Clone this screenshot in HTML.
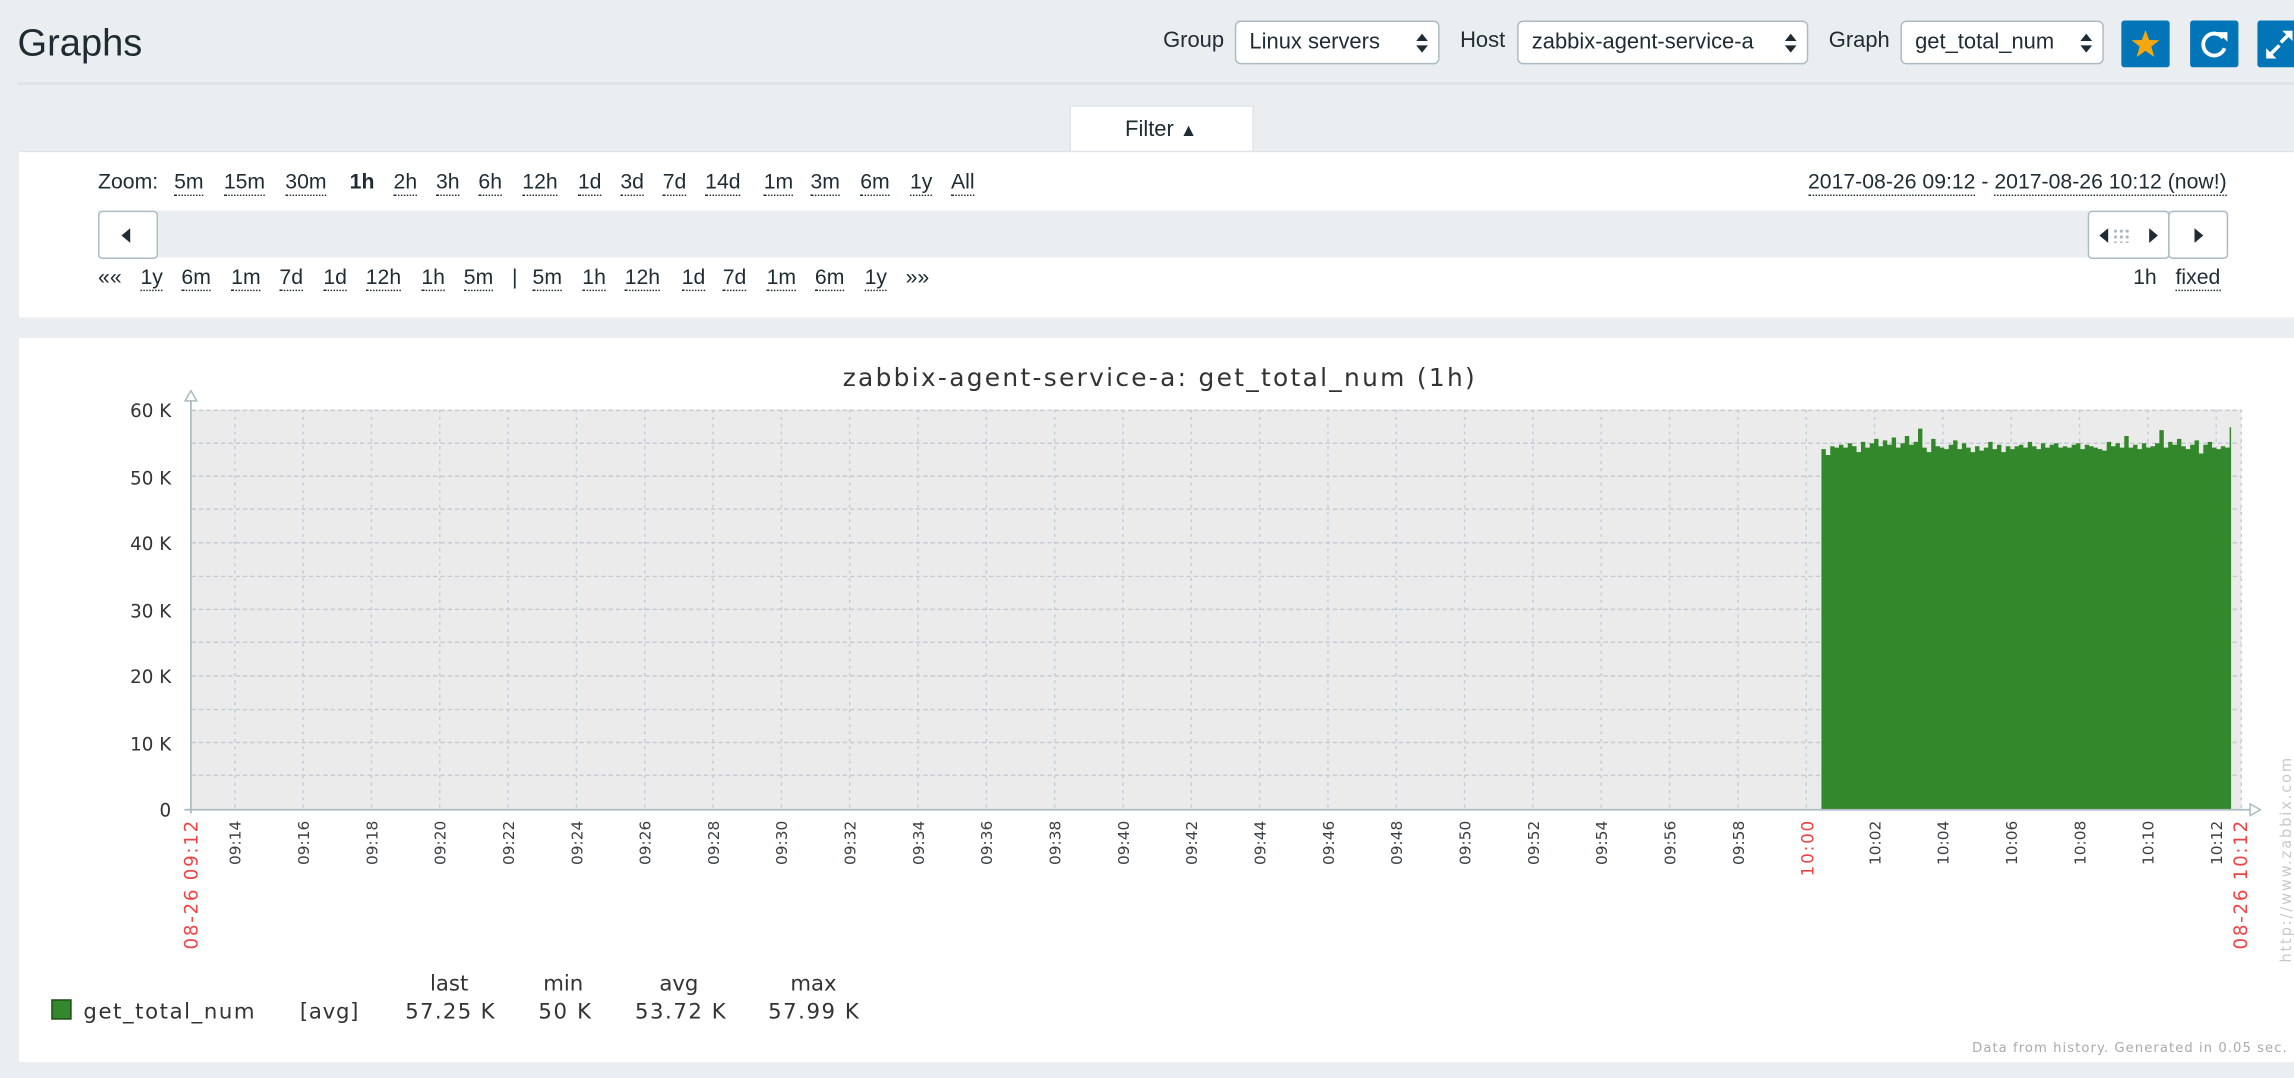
<!DOCTYPE html>
<html><head><meta charset="utf-8">
<style>
html,body{margin:0;padding:0;width:2294px;height:1078px;overflow:hidden;background:#ebeef0;}
#w{position:absolute;left:0;top:0;width:1568px;height:737px;transform:scale(1.46301);transform-origin:0 0;font-family:"Liberation Sans",Arial,sans-serif;color:#1f2c33;}
.a{position:absolute;white-space:nowrap;}
.sel{position:absolute;top:14px;height:30px;background:#fff;border:1px solid #acbbc2;border-radius:4px;box-sizing:border-box;font-size:15px;line-height:28px;padding-left:9px;}
.sel i{position:absolute;right:7px;top:8px;width:0;height:0;border-left:4px solid transparent;border-right:4px solid transparent;border-bottom:5px solid #1f2c33;}
.sel b{position:absolute;right:7px;top:16px;width:0;height:0;border-left:4px solid transparent;border-right:4px solid transparent;border-top:5px solid #1f2c33;}
.lbl{position:absolute;top:19px;font-size:15px;}
.btn{position:absolute;top:14px;width:33px;height:32px;background:#0275b8;border-radius:2px;}
.z{position:absolute;font-size:14.5px;white-space:nowrap;}
.u{border-bottom:1px dotted #1f2c33;}
.nb{position:absolute;background:#fff;border:1px solid #acbbc2;border-radius:3px;box-sizing:border-box;}
</style></head><body><div id="w">
<div class="a" style="left:12px;top:14px;font-size:26px;">Graphs</div>
<div class="lbl" style="left:795px;">Group</div>
<div class="sel" style="left:844px;width:140px;">Linux servers<i></i><b></b></div>
<div class="lbl" style="left:998px;">Host</div>
<div class="sel" style="left:1037px;width:199px;">zabbix-agent-service-a<i></i><b></b></div>
<div class="lbl" style="left:1250px;">Graph</div>
<div class="sel" style="left:1299px;width:139px;">get_total_num<i></i><b></b></div>
<div class="btn" style="left:1450px;"><svg width="33" height="32" viewBox="0 0 33 32"><polygon points="16.5,6.5 19,13.3 26,13.5 20.5,17.8 22.5,25 16.5,20.8 10.5,25 12.5,17.8 7,13.5 14,13.3" fill="#f4a80d"/></svg></div>
<div class="btn" style="left:1497px;"><svg width="33" height="32" viewBox="0 0 33 32"><path d="M22.5 12 A7.5 7.5 0 1 0 23.5 19" fill="none" stroke="#fff" stroke-width="2.6"/><polygon points="19,8 25.5,8 25.5,14.5" fill="#fff"/></svg></div>
<div class="btn" style="left:1543px;width:30px;"><svg width="30" height="32" viewBox="0 0 30 32"><path d="M9 23 L15 17 M21 10 L16 15" stroke="#fff" stroke-width="2.4"/><polygon points="6,26 6,19 13,26" fill="#fff"/><polygon points="24,7 24,14 17,7" fill="#fff"/></svg></div>
<div class="a" style="left:12px;top:56px;width:1556px;height:2px;background:#dfe4e7;"></div>

<div class="a" style="left:731px;top:72px;width:126px;height:33px;background:#fff;border:1px solid #dfe4e7;border-bottom:none;box-sizing:border-box;"></div>
<div class="a" style="left:769px;top:80px;font-size:15px;">Filter <span style="font-size:12px;">&#9650;</span></div>
<div class="a" style="left:13px;top:103px;width:1560px;height:113px;background:#fff;border-top:1px solid #dfe4e7;"></div>

<div class="z" style="left:67px;top:117px;">Zoom:</div>
<div class="z u" style="left:119px;top:117px;">5m</div>
<div class="z u" style="left:153px;top:117px;">15m</div>
<div class="z u" style="left:195px;top:117px;">30m</div>
<div class="z" style="left:239px;top:117px;font-weight:bold;">1h</div>
<div class="z u" style="left:269px;top:117px;">2h</div>
<div class="z u" style="left:298px;top:117px;">3h</div>
<div class="z u" style="left:327px;top:117px;">6h</div>
<div class="z u" style="left:357px;top:117px;">12h</div>
<div class="z u" style="left:395px;top:117px;">1d</div>
<div class="z u" style="left:424px;top:117px;">3d</div>
<div class="z u" style="left:453px;top:117px;">7d</div>
<div class="z u" style="left:482px;top:117px;">14d</div>
<div class="z u" style="left:522px;top:117px;">1m</div>
<div class="z u" style="left:554px;top:117px;">3m</div>
<div class="z u" style="left:588px;top:117px;">6m</div>
<div class="z u" style="left:622px;top:117px;">1y</div>
<div class="z u" style="left:650px;top:117px;">All</div>
<div class="z" style="right:46px;top:117px;"><span class="u">2017-08-26 09:12</span> - <span class="u">2017-08-26 10:12 (now!)</span></div>

<div class="a" style="left:67px;top:144px;width:1456px;height:32px;background:#ebeef0;"></div>
<div class="nb" style="left:67px;top:144px;width:41px;height:33px;"><div style="position:absolute;left:15px;top:11px;border-top:5px solid transparent;border-bottom:5px solid transparent;border-right:6px solid #1f2c33;"></div></div>
<div class="nb" style="left:1427px;top:144px;width:56px;height:33px;"><div style="position:absolute;left:7px;top:11px;border-top:5px solid transparent;border-bottom:5px solid transparent;border-right:6px solid #1f2c33;"></div><div style="position:absolute;left:16px;top:11px;width:12px;height:10px;background:radial-gradient(circle,#aab5bd 1px,transparent 1.2px) 0 0/4px 4px;"></div><div style="position:absolute;left:41px;top:11px;border-top:5px solid transparent;border-bottom:5px solid transparent;border-left:6px solid #1f2c33;"></div></div>
<div class="nb" style="left:1482px;top:144px;width:41px;height:33px;"><div style="position:absolute;left:17px;top:11px;border-top:5px solid transparent;border-bottom:5px solid transparent;border-left:6px solid #1f2c33;"></div></div>

<div class="z" style="left:67px;top:182px;">««</div>
<div class="z u" style="left:96px;top:182px;">1y</div>
<div class="z u" style="left:124px;top:182px;">6m</div>
<div class="z u" style="left:158px;top:182px;">1m</div>
<div class="z u" style="left:191px;top:182px;">7d</div>
<div class="z u" style="left:221px;top:182px;">1d</div>
<div class="z u" style="left:250px;top:182px;">12h</div>
<div class="z u" style="left:288px;top:182px;">1h</div>
<div class="z u" style="left:317px;top:182px;">5m</div>
<div class="z" style="left:350px;top:182px;">|</div>
<div class="z u" style="left:364px;top:182px;">5m</div>
<div class="z u" style="left:398px;top:182px;">1h</div>
<div class="z u" style="left:427px;top:182px;">12h</div>
<div class="z u" style="left:466px;top:182px;">1d</div>
<div class="z u" style="left:494px;top:182px;">7d</div>
<div class="z u" style="left:524px;top:182px;">1m</div>
<div class="z u" style="left:557px;top:182px;">6m</div>
<div class="z u" style="left:591px;top:182px;">1y</div>
<div class="z" style="left:619px;top:182px;">»»</div>
<div class="z" style="left:1458px;top:182px;">1h</div>
<div class="z u" style="left:1487px;top:182px;">fixed</div>

<div class="a" style="left:13px;top:231px;width:1560px;height:495px;background:#fff;"></div>

<svg class="a" style="left:0;top:0" width="1568" height="737" viewBox="0 0 1568 737" font-family="DejaVu Sans, sans-serif">
<text x="792" y="264" text-anchor="middle" font-size="17" fill="#333" textLength="432">zabbix-agent-service-a: get_total_num (1h)</text>
<rect x="131" y="280" width="1401" height="273" fill="#ebebeb"/>
<g stroke="#c5ccd4" stroke-width="1" stroke-dasharray="3,2">
<line x1="131" y1="280.5" x2="1532" y2="280.5"/><line x1="131" y1="303" x2="1532" y2="303"/><line x1="131" y1="325.5" x2="1532" y2="325.5"/><line x1="131" y1="348" x2="1532" y2="348"/><line x1="131" y1="371" x2="1532" y2="371"/><line x1="131" y1="394" x2="1532" y2="394"/><line x1="131" y1="416.5" x2="1532" y2="416.5"/><line x1="131" y1="439" x2="1532" y2="439"/><line x1="131" y1="462" x2="1532" y2="462"/><line x1="131" y1="485" x2="1532" y2="485"/><line x1="131" y1="507.5" x2="1532" y2="507.5"/><line x1="131" y1="530" x2="1532" y2="530"/>
</g>
<g stroke="#c5ccd4" stroke-width="1" stroke-dasharray="2,3">
<line x1="160.5" y1="280" x2="160.5" y2="553"/><line x1="207.2" y1="280" x2="207.2" y2="553"/><line x1="253.9" y1="280" x2="253.9" y2="553"/><line x1="300.6" y1="280" x2="300.6" y2="553"/><line x1="347.3" y1="280" x2="347.3" y2="553"/><line x1="394" y1="280" x2="394" y2="553"/><line x1="440.7" y1="280" x2="440.7" y2="553"/><line x1="487.4" y1="280" x2="487.4" y2="553"/><line x1="534.1" y1="280" x2="534.1" y2="553"/><line x1="580.8" y1="280" x2="580.8" y2="553"/><line x1="627.5" y1="280" x2="627.5" y2="553"/><line x1="674.2" y1="280" x2="674.2" y2="553"/><line x1="720.9" y1="280" x2="720.9" y2="553"/><line x1="767.6" y1="280" x2="767.6" y2="553"/><line x1="814.3" y1="280" x2="814.3" y2="553"/><line x1="861" y1="280" x2="861" y2="553"/><line x1="907.7" y1="280" x2="907.7" y2="553"/><line x1="954.4" y1="280" x2="954.4" y2="553"/><line x1="1001.1" y1="280" x2="1001.1" y2="553"/><line x1="1047.8" y1="280" x2="1047.8" y2="553"/><line x1="1094.5" y1="280" x2="1094.5" y2="553"/><line x1="1141.2" y1="280" x2="1141.2" y2="553"/><line x1="1187.9" y1="280" x2="1187.9" y2="553"/><line x1="1234.6" y1="280" x2="1234.6" y2="553"/><line x1="1281.3" y1="280" x2="1281.3" y2="553"/><line x1="1328" y1="280" x2="1328" y2="553"/><line x1="1374.7" y1="280" x2="1374.7" y2="553"/><line x1="1421.4" y1="280" x2="1421.4" y2="553"/><line x1="1468.1" y1="280" x2="1468.1" y2="553"/><line x1="1514.8" y1="280" x2="1514.8" y2="553"/><line x1="1532" y1="280" x2="1532" y2="553"/>
</g>
<path d="M1245 553V307h3V311h3V305h3V306h3V304h3V306h3V303h3V305h3V309h3V302h3V306h3V303h3V300h3V305h3V301h3V304h3V299h3V306h3V303h3V298h3V304h3V302h3V293h3V306h3V309h3V300h3V305h3V306h3V307h3V304h3V301h3V307h3V303h3V306h3V309h3V305h3V308h3V306h3V302h3V307h3V304h3V309h3V305h3V307h3V305h3V304h3V306h3V302h3V305h3V307h3V303h3V306h3V304h3V303h3V306h3V305h3V306h3V304h3V303h3V307h3V304h3V305h3V306h3V307h3V308h3V302h3V305h3V303h3V306h3V298h3V306h3V304h3V307h3V303h3V306h3V305h3V303h3V294h3V306h3V302h3V304h3V300h3V305h3V307h3V304h3V301h3V310h3V304h3V302h3V306h3V307h3V305h3V306h3V292h1V553Z" fill="#33882c"/>
<line x1="130.5" y1="270" x2="130.5" y2="556" stroke="#acbbc2" stroke-width="1.2"/>
<polygon points="126.5,274 130.5,267 134.5,274" fill="#fff" stroke="#acbbc2"/>
<line x1="126" y1="553.5" x2="1540" y2="553.5" stroke="#acbbc2" stroke-width="1.2"/>
<polygon points="1538,549.5 1545,553.5 1538,557.5" fill="#fff" stroke="#acbbc2"/>
<g font-size="12.5" fill="#333" text-anchor="end">
<text x="117" y="285">60 K</text><text x="117" y="331">50 K</text><text x="117" y="376">40 K</text><text x="117" y="422">30 K</text><text x="117" y="467">20 K</text><text x="117" y="513">10 K</text><text x="117" y="558">0</text>
</g>
<g font-size="10.5" fill="#3a3f44" text-anchor="end">
<text transform="translate(164.5,561) rotate(-90)">09:14</text>
<text transform="translate(211.2,561) rotate(-90)">09:16</text>
<text transform="translate(257.9,561) rotate(-90)">09:18</text>
<text transform="translate(304.6,561) rotate(-90)">09:20</text>
<text transform="translate(351.3,561) rotate(-90)">09:22</text>
<text transform="translate(398,561) rotate(-90)">09:24</text>
<text transform="translate(444.7,561) rotate(-90)">09:26</text>
<text transform="translate(491.4,561) rotate(-90)">09:28</text>
<text transform="translate(538.1,561) rotate(-90)">09:30</text>
<text transform="translate(584.8,561) rotate(-90)">09:32</text>
<text transform="translate(631.5,561) rotate(-90)">09:34</text>
<text transform="translate(678.2,561) rotate(-90)">09:36</text>
<text transform="translate(724.9,561) rotate(-90)">09:38</text>
<text transform="translate(771.6,561) rotate(-90)">09:40</text>
<text transform="translate(818.3,561) rotate(-90)">09:42</text>
<text transform="translate(865,561) rotate(-90)">09:44</text>
<text transform="translate(911.7,561) rotate(-90)">09:46</text>
<text transform="translate(958.4,561) rotate(-90)">09:48</text>
<text transform="translate(1005.1,561) rotate(-90)">09:50</text>
<text transform="translate(1051.8,561) rotate(-90)">09:52</text>
<text transform="translate(1098.5,561) rotate(-90)">09:54</text>
<text transform="translate(1145.2,561) rotate(-90)">09:56</text>
<text transform="translate(1191.9,561) rotate(-90)">09:58</text>
<text transform="translate(1285.3,561) rotate(-90)">10:02</text>
<text transform="translate(1332,561) rotate(-90)">10:04</text>
<text transform="translate(1378.7,561) rotate(-90)">10:06</text>
<text transform="translate(1425.4,561) rotate(-90)">10:08</text>
<text transform="translate(1472.1,561) rotate(-90)">10:10</text>
<text transform="translate(1518.8,561) rotate(-90)">10:12</text>
</g>
<g fill="#ee4444" text-anchor="end">
<text font-size="11.5" transform="translate(1239.5,561) rotate(-90)" textLength="38">10:00</text>
<text font-size="12.5" transform="translate(135,561) rotate(-90)" textLength="88">08-26 09:12</text>
<text font-size="12.5" transform="translate(1536,561) rotate(-90)" textLength="88">08-26 10:12</text>
</g>
<text transform="translate(1566,658) rotate(-90)" font-size="10" fill="#c8c8c8" textLength="140">http://www.zabbix.com</text>
<rect x="35.5" y="683.5" width="13" height="13" fill="#33882c" stroke="#1e4d1a"/>
<g font-size="14.5" fill="#333">
<text x="57" y="696" textLength="117">get_total_num</text>
<text x="205" y="696" textLength="40">[avg]</text>
<text x="277" y="696" textLength="61">57.25 K</text>
<text x="368" y="696" textLength="36">50 K</text>
<text x="434" y="696" textLength="62">53.72 K</text>
<text x="525" y="696" textLength="62">57.99 K</text>
<g text-anchor="middle"><text x="307" y="677">last</text><text x="385" y="677">min</text><text x="464" y="677">avg</text><text x="556" y="677">max</text></g>
</g>
<text x="1563" y="719" text-anchor="end" font-size="9" fill="#aaa" textLength="215">Data from history. Generated in 0.05 sec.</text>
</svg>
</div></body></html>
